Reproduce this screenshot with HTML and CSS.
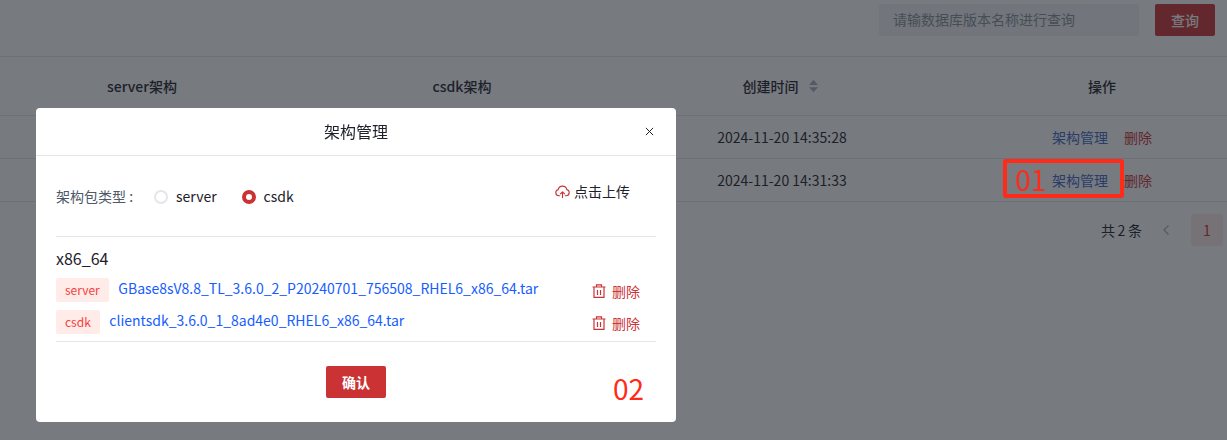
FILE: index.html
```html
<!DOCTYPE html>
<html lang="zh">
<head>
<meta charset="utf-8">
<title>架构管理</title>
<link rel="stylesheet" href="styles.css">
</head>
<body>
<div class="page">
  <div class="toolbar">
    <div class="search">请输数据库版本名称进行查询</div>
    <button class="query">查询</button>
  </div>
  <div class="table">
    <div class="row head">
      <div>server架构</div>
      <div>csdk架构</div>
      <div class="sortcell">创建时间
        <svg class="sorter" viewBox="0 0 8 12" width="9" height="14"><path d="M4 0.500 8 5H0z"/><path d="M4 11.500 0 7h8z"/></svg>
      </div>
      <div>操作</div>
    </div>
    <div class="row">
      <div></div><div></div>
      <div>2024-11-20 14:35:28</div>
      <div class="actions"><a class="blue">架构管理</a><a class="red">删除</a></div>
    </div>
    <div class="row">
      <div></div><div></div>
      <div>2024-11-20 14:31:33</div>
      <div class="actions"><a class="blue">架构管理</a><a class="red">删除</a></div>
    </div>
  </div>
  <div class="pager">
    <span class="total">共 2 条</span>
    <svg class="prev" viewBox="0 0 8 12" width="8" height="12"><path d="M6.500 1.500 2 6l4.500 4.500" fill="none" stroke="currentColor" stroke-width="1.200"/></svg>
    <span class="current">1</span>
  </div>
</div>
<div class="mask"></div>
<div class="callout"><span>01</span></div>
<div class="modal">
  <div class="modal-head">
    <span>架构管理</span>
    <svg class="close" viewBox="0 0 10 10" width="9" height="9"><path d="M1 1l8 8M9 1L1 9" stroke="#1d2129" stroke-width="1.100" fill="none"/></svg>
  </div>
  <div class="modal-body">
    <div class="type-row">
      <div class="radios">
        <span class="label">架构包类型 :</span>
        <span class="radio"></span><span class="opt">server</span>
        <span class="radio on"></span><span class="opt">csdk</span>
      </div>
      <div class="upload">
        <svg viewBox="0 0 16 16" width="15" height="15" fill="none" stroke="#cb3234" stroke-width="1.200" stroke-linecap="round" stroke-linejoin="round"><path d="M5 12.500H4a3.300 3.300 0 0 1-.6-6.500 4.700 4.700 0 0 1 9.200 0 3.300 3.300 0 0 1-.6 6.500h-1"/><path d="M8 14.500V8.500M5.800 10.500 8 8.300l2.200 2.200"/></svg>
        <span>点击上传</span>
      </div>
    </div>
    <div class="files">
      <div class="arch">x86_64</div>
      <div class="file">
        <span class="tag">server</span>
        <a class="link">GBase8sV8.8_TL_3.6.0_2_P20240701_756508_RHEL6_x86_64.tar</a>
        <span class="del">
          <svg viewBox="0 0 14 14" width="14" height="14" fill="none" stroke="#cb3234" stroke-width="1.200"><path d="M0.500 3h13M4.500 3V0.800h5V3M2 3v10.400h10V3M5.500 6v5M8.500 6v5"/></svg>
          删除
        </span>
      </div>
      <div class="file last">
        <span class="tag">csdk</span>
        <a class="link">clientsdk_3.6.0_1_8ad4e0_RHEL6_x86_64.tar</a>
        <span class="del">
          <svg viewBox="0 0 14 14" width="14" height="14" fill="none" stroke="#cb3234" stroke-width="1.200"><path d="M0.500 3h13M4.500 3V0.800h5V3M2 3v10.400h10V3M5.500 6v5M8.500 6v5"/></svg>
          删除
        </span>
      </div>
    </div>
    <div class="foot"><button class="confirm">确认</button></div>
  </div>
  <span class="note">02</span>
</div>
</body>
</html>
```
FILE: styles.css
```css
* { box-sizing: border-box; }
html, body { margin: 0; height: 100%; overflow: hidden; }
body {
  background: #fff;
  color: #1d2129;
  font-family: "Noto Sans CJK SC", "Noto Sans", sans-serif;
  font-size: 14px;
}
button { font: inherit; border: 0; padding: 0; }

.toolbar {
  height: 57px;
  padding: 4px 12px 0 0;
  border-bottom: 1px solid #e5e6eb;
  display: flex;
  justify-content: flex-end;
  gap: 16px;
}
.search {
  width: 260px;
  height: 32px;
  padding-left: 14px;
  line-height: 31px;
  background: #f2f3f5;
  color: #86909c;
  border-radius: 2px;
}
.query {
  width: 60px;
  height: 32px;
  background: #cb3234;
  color: #fff;
  font-weight: 500;
  border-radius: 2px;
}

.table { margin-left: -18px; width: 1280px; }
.row {
  display: grid;
  grid-template-columns: repeat(4, 320px);
  height: 43px;
  align-items: center;
  text-align: center;
  border-bottom: 1px solid #e5e6eb;
}
.row.head { height: 59px; font-weight: 500; }
.sortcell { display: flex; justify-content: center; align-items: center; gap: 10px; padding-right: 4px; }
.sorter { fill: #a9aeb8; }
.actions { display: flex; justify-content: center; gap: 16px; }
.blue { color: #3c66c9; }
.red { color: #cb3234; }

.pager {
  display: flex;
  justify-content: flex-end;
  align-items: center;
  height: 32px;
  margin-top: 12px;
  padding-right: 4px;
}
.total { margin-right: 20px; word-spacing: -0.5px; }
.prev { color: #a9aeb8; margin-right: 21px; }
.current {
  width: 32px;
  height: 32px;
  line-height: 32px;
  text-align: center;
  background: #ffece8;
  color: #cb3234;
  border-radius: 2px;
}

.mask { position: fixed; inset: 0; background: rgba(29, 33, 41, .6); }

.callout {
  position: fixed;
  left: 1003px;
  top: 159px;
  width: 121px;
  height: 39px;
  border: 4px solid #ff2a17;
  border-radius: 3px;
  color: #ff2a17;
  font-size: 28px;
  line-height: 32px;
  padding-left: 8px;
}

.modal {
  position: fixed;
  left: 36px;
  top: 108px;
  width: 640px;
  height: 314px;
  background: #fff;
  border-radius: 4px;
}
.modal-head {
  position: relative;
  height: 48px;
  border-bottom: 1px solid #e5e6eb;
  text-align: center;
  font-size: 16px;
  line-height: 46px;
}
.close { position: absolute; right: 22px; top: 19px; }
.modal-body { padding: 0 20px; }

.type-row {
  display: flex;
  justify-content: space-between;
  align-items: flex-start;
  height: 81px;
  border-bottom: 1px solid #e5e6eb;
}
.radios { display: flex; align-items: center; height: 24px; margin-top: 28px; }
.label { color: #4e5969; width: 98px; font-size: 14px; }
.radio {
  width: 14px;
  height: 14px;
  border: 2px solid #e5e6eb;
  border-radius: 50%;
  margin-right: 8px;
  position: relative;
  top: 1px;
}
.radio.on { border: 4px solid #cb3234; }
.opt { margin-right: 25px; }
.upload {
  display: flex;
  align-items: center;
  gap: 4px;
  margin: 23px 26px 0 0;
  height: 24px;
}

.files { border-bottom: 1px solid #e5e6eb; }
.arch { font-size: 16px; line-height: 24px; height: 41px; padding-top: 9px; }
.file { display: flex; align-items: flex-start; height: 32px; position: relative; }
.file.last { height: 31px; }
.tag {
  height: 24px;
  line-height: 24px;
  padding: 0 9px;
  background: #ffece8;
  color: #f53f3f;
  font-size: 12px;
  border-radius: 2px;
  margin-right: 9.500px;
}
.link { color: #165dff; line-height: 20px; }
.del {
  position: absolute;
  right: 16px;
  top: 2px;
  display: flex;
  align-items: center;
  gap: 6px;
  color: #cb3234;
  line-height: 22px;
}

.foot { display: flex; justify-content: center; padding-top: 24px; }
.confirm {
  width: 60px;
  height: 32px;
  background: #cb3234;
  color: #fff;
  font-weight: 700;
  border-radius: 2px;
}
.note {
  position: absolute;
  left: 577px;
  top: 260px;
  color: #ff2a17;
  font-size: 28px;
  line-height: 40px;
}
```
